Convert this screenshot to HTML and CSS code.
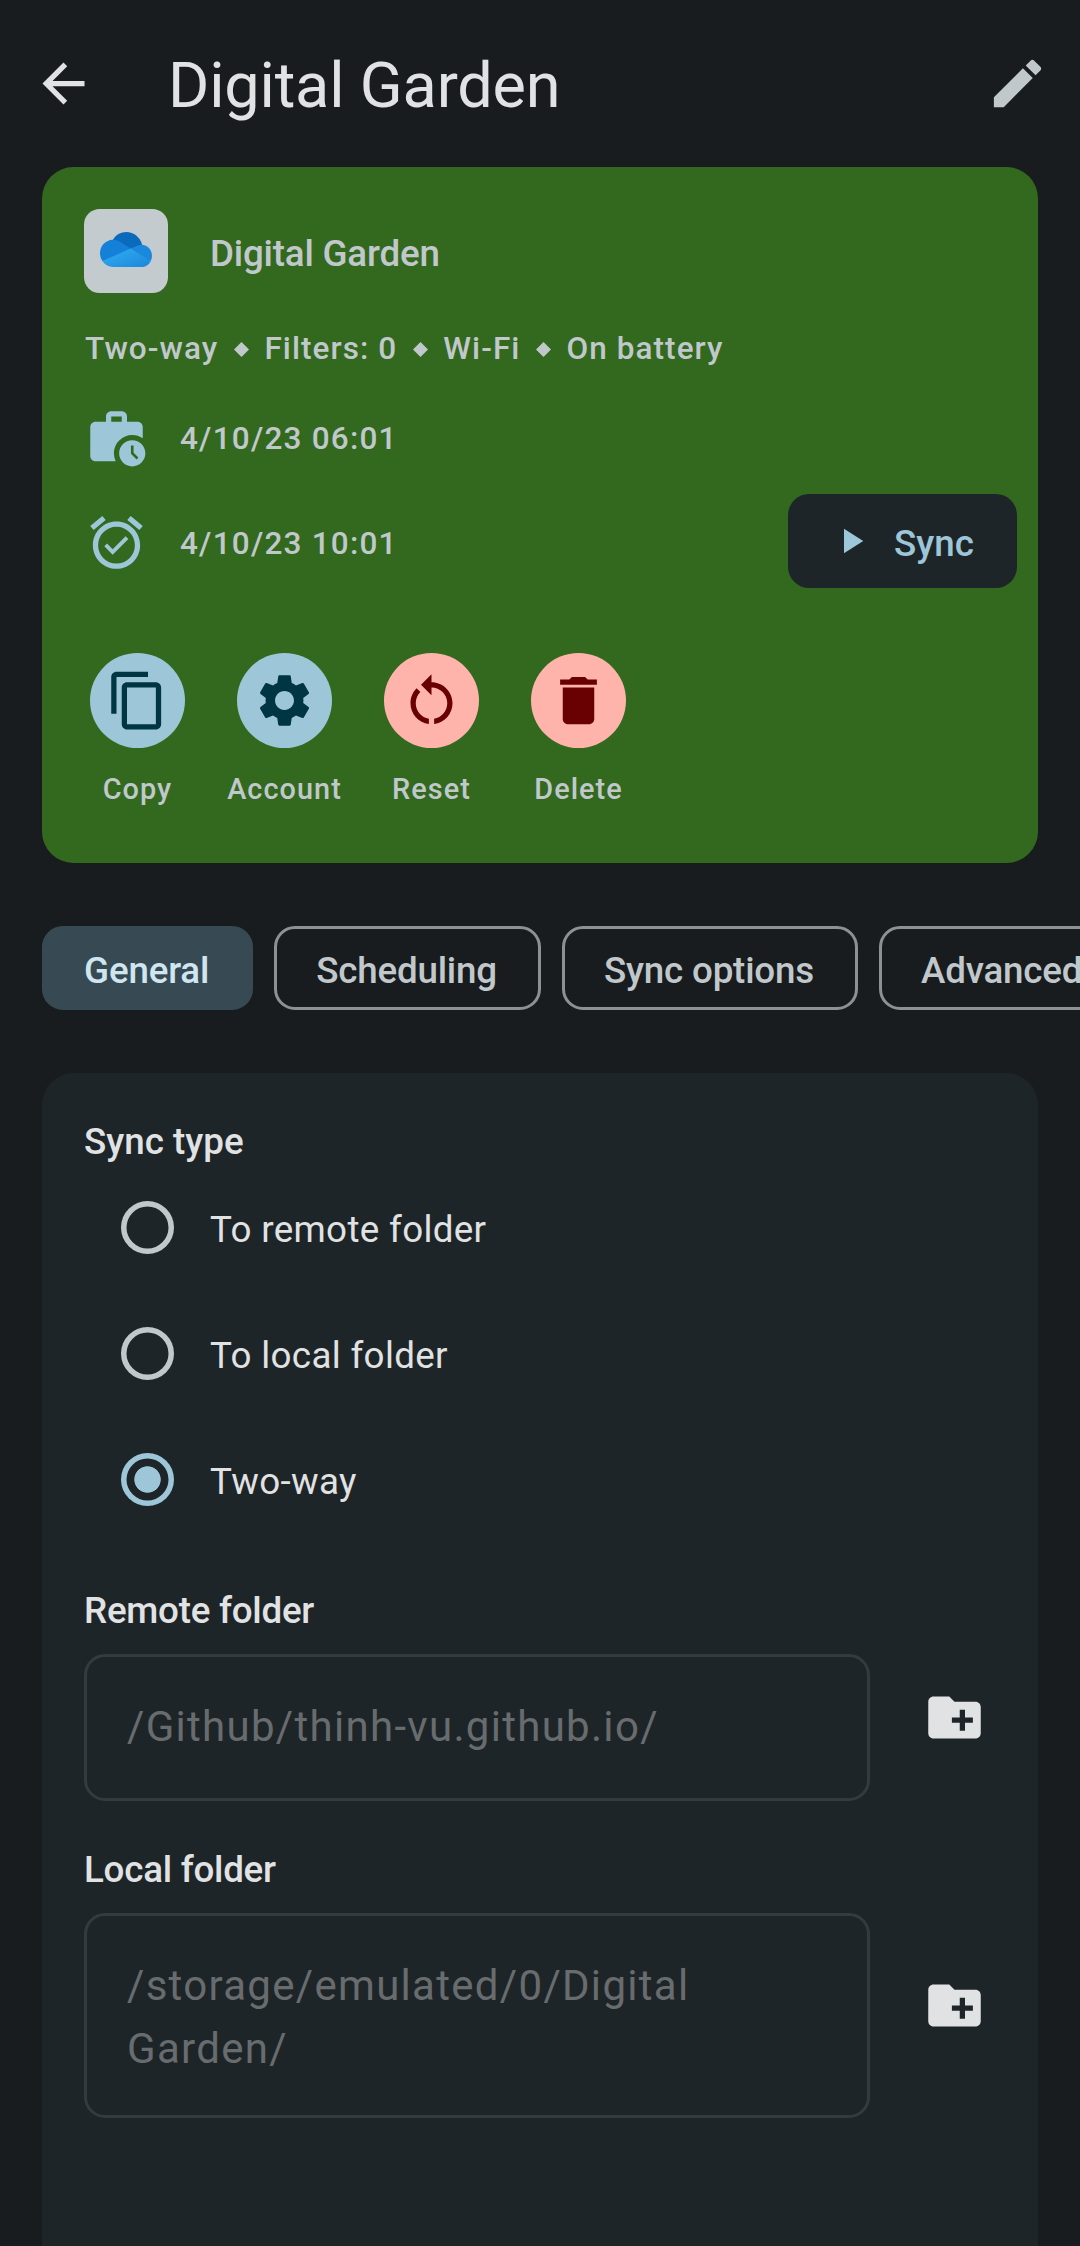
FILE: index.html
```html
<!DOCTYPE html>
<html lang="en">
<head>
<meta charset="utf-8">
<title>Digital Garden</title>
<link rel="stylesheet" href="styles.css">
</head>
<body>
<header class="app-bar">
  <svg class="icon" viewBox="0 0 24 24"><path d="M20 11H7.83l5.59-5.59L12 4l-8 8 8 8 1.41-1.41L7.83 13H20v-2z"/></svg>
  <h1 class="app-title">Digital Garden</h1>
  <svg class="icon icon-edit" viewBox="0 0 24 24"><path d="M3 17.25V21h3.75L17.81 9.94l-3.75-3.75L3 17.25zM20.71 7.04c.39-.39.39-1.02 0-1.41l-2.34-2.34c-.39-.39-1.02-.39-1.41 0l-1.83 1.83 3.75 3.75 1.83-1.83z"/></svg>
</header>

<section class="summary">
  <div class="summary-head">
    <div class="provider">
      <svg class="cloud" viewBox="0 0 1030 661" preserveAspectRatio="none">
        <defs><linearGradient id="base" x1="0" y1="0" x2="1" y2="1"><stop offset="0" stop-color="#32b0f2"/><stop offset="1" stop-color="#1b86dc"/></linearGradient></defs>
        <path fill="#0a6bbd" d="M622.292 445.338l212.613-203.327C790.741 69.804 615.338-33.996 443.13 10.168a321.9 321.9 0 0 0-188.92 134.837c3.29-.083 368.082 300.333 368.082 300.333z"/>
        <path fill="#1580d8" d="M392.776 183.283l-.01.035a256.233 256.233 0 0 0-135.925-38.823c-1.104 0-2.19.076-3.29.083C112.063 146.765-1.74 263.423.02 404.91a257.24 257.24 0 0 0 46.246 144.094l318.528-39.894 244.21-196.915-216.228-128.912z"/>
        <path fill="#1a88dc" d="M834.905 242.012c-4.674-.312-9.37-.528-14.123-.528a208.5 208.5 0 0 0-82.93 17.117l-.006-.022-128.844 54.22 142.04 175.456 253.934 61.728c54.8-101.732 16.752-228.625-84.98-283.424a209.2 209.2 0 0 0-85.09-24.546z"/>
        <path fill="url(#base)" d="M46.265 549.003C94.36 618.757 173.7 660.386 258.43 660.276h562.356c76.937.022 147.691-42.157 184.186-109.89L609.003 312.8z"/>
      </svg>
    </div>
    <h2 class="label label-summary">Digital Garden</h2>
  </div>

  <div class="facts">
    <span>Two-way</span>
    <svg class="diamond" viewBox="0 0 14 14"><path d="M7 0l7 7-7 7-7-7z"/></svg>
    <span>Filters: 0</span>
    <svg class="diamond" viewBox="0 0 14 14"><path d="M7 0l7 7-7 7-7-7z"/></svg>
    <span>Wi-Fi</span>
    <svg class="diamond" viewBox="0 0 14 14"><path d="M7 0l7 7-7 7-7-7z"/></svg>
    <span>On battery</span>
  </div>

  <div class="run-row">
    <svg class="icon" viewBox="0 0 24 24"><path d="M18 11c1.49 0 2.87.47 4 1.26V8c0-1.11-.89-2-2-2h-4V4c0-1.11-.89-2-2-2h-4c-1.11 0-2 .89-2 2v2H4c-1.11 0-1.99.89-1.99 2L2 19c0 1.11.89 2 2 2h7.68A6.95 6.95 0 0 1 11 18c0-3.87 3.13-7 7-7zM10 4h4v2h-4V4z"/><path d="M18 13c-2.76 0-5 2.24-5 5s2.24 5 5 5 5-2.24 5-5-2.24-5-5-5zm1.65 7.35L17.5 18.2V15h1v2.79l1.85 1.85-.7.71z"/></svg>
    <span>4/10/23 06:01</span>
  </div>
  <div class="run-row run-next">
    <svg class="icon" viewBox="0 0 24 24"><path d="M22 5.72l-4.6-3.86-1.29 1.53 4.6 3.86L22 5.72zM7.88 3.39L6.6 1.86 2 5.71l1.29 1.53 4.59-3.85zM12 4c-4.97 0-9 4.03-9 9s4.02 9 9 9c4.97 0 9-4.03 9-9s-4.03-9-9-9zm0 16c-3.87 0-7-3.13-7-7s3.13-7 7-7 7 3.13 7 7-3.13 7-7 7zm-1.46-5.47L8.41 12.4l-1.06 1.06 3.18 3.18 6-6-1.06-1.06-4.93 4.95z"/></svg>
    <span>4/10/23 10:01</span>
    <button class="sync label"><svg class="play" viewBox="0 0 24 24"><path d="M8 5v14l11-7z"/></svg><span>Sync</span></button>
  </div>

  <div class="actions">
    <div class="action">
      <div class="disc"><svg class="icon" viewBox="0 0 24 24"><path d="M16 1H4c-1.1 0-2 .9-2 2v14h2V3h12V1zm3 4H8c-1.1 0-2 .9-2 2v14c0 1.1.9 2 2 2h11c1.1 0 2-.9 2-2V7c0-1.1-.9-2-2-2zm0 16H8V7h11v14z"/></svg></div>
      <span>Copy</span>
    </div>
    <div class="action">
      <div class="disc"><svg class="icon" viewBox="0 0 24 24"><path d="M19.14,12.94c0.04-0.3,0.06-0.61,0.06-0.94c0-0.32-0.02-0.64-0.07-0.94l2.03-1.58c0.18-0.14,0.23-0.41,0.12-0.61l-1.92-3.32c-0.12-0.22-0.37-0.29-0.59-0.22l-2.39,0.96c-0.5-0.38-1.03-0.7-1.62-0.94L14.4,2.81c-0.04-0.24-0.24-0.41-0.48-0.41h-3.84c-0.24,0-0.43,0.17-0.47,0.41L9.25,5.35C8.66,5.59,8.12,5.92,7.63,6.29L5.24,5.33c-0.22-0.08-0.47,0-0.59,0.22L2.74,8.87C2.62,9.08,2.66,9.34,2.86,9.48l2.03,1.58C4.84,11.36,4.8,11.69,4.8,12s0.02,0.64,0.07,0.94l-2.03,1.58c-0.18,0.14-0.23,0.41-0.12,0.61l1.92,3.32c0.12,0.22,0.37,0.29,0.59,0.22l2.39-0.96c0.5,0.38,1.03,0.7,1.62,0.94l0.36,2.54c0.05,0.24,0.24,0.41,0.48,0.41h3.84c0.24,0,0.44-0.17,0.47-0.41l0.36-2.54c0.59-0.24,1.13-0.56,1.62-0.94l2.39,0.96c0.22,0.08,0.47,0,0.59-0.22l1.92-3.32c0.12-0.22,0.07-0.47-0.12-0.61L19.14,12.94z M12,15.6c-1.98,0-3.6-1.62-3.6-3.6s1.62-3.6,3.6-3.6s3.6,1.62,3.6,3.6S13.98,15.6,12,15.6z"/></svg></div>
      <span>Account</span>
    </div>
    <div class="action">
      <div class="disc disc-danger"><svg class="icon" viewBox="0 0 24 24"><path d="M12,5V2L8,6l4,4V7c3.31,0,6,2.69,6,6c0,2.97-2.17,5.43-5,5.91v2.02c3.95-0.49,7-3.85,7-7.93C20,8.58,16.42,5,12,5z"/><path d="M6,13c0-1.65,0.67-3.15,1.76-4.24L6.34,7.34C4.9,8.79,4,10.79,4,13c0,4.08,3.05,7.44,7,7.93v-2.02C8.17,18.43,6,15.97,6,13z"/></svg></div>
      <span>Reset</span>
    </div>
    <div class="action">
      <div class="disc disc-danger"><svg class="icon" viewBox="0 0 24 24"><path d="M6 19c0 1.1.9 2 2 2h8c1.1 0 2-.9 2-2V7H6v12zM19 4h-3.5l-1-1h-5l-1 1H5v2h14V4z"/></svg></div>
      <span>Delete</span>
    </div>
  </div>
</section>

<nav class="tabs">
  <button class="tab tab-active label">General</button>
  <button class="tab label">Scheduling</button>
  <button class="tab label">Sync options</button>
  <button class="tab label">Advanced</button>
</nav>

<main class="panel">
  <h3 class="label heading-type">Sync type</h3>
  <div class="choices">
    <div class="choice"><span class="radio"></span><span>To remote folder</span></div>
    <div class="choice"><span class="radio"></span><span>To local folder</span></div>
    <div class="choice"><span class="radio radio-on"></span><span>Two-way</span></div>
  </div>

  <h3 class="label heading-folder">Remote folder</h3>
  <div class="folder-row">
    <div class="field">/Github/thinh-vu.github.io/</div>
    <svg class="icon pick" viewBox="0 0 24 24"><path d="M20 6h-8l-2-2H4c-1.11 0-1.99.89-1.99 2L2 18c0 1.11.89 2 2 2h16c1.11 0 2-.89 2-2V8c0-1.11-.89-2-2-2zm-1 8h-3v3h-2v-3h-3v-2h3V9h2v3h3v2z"/></svg>
  </div>

  <h3 class="label heading-folder">Local folder</h3>
  <div class="folder-row">
    <div class="field field-tall">/storage/emulated/0/Digital Garden/</div>
    <svg class="icon pick" viewBox="0 0 24 24"><path d="M20 6h-8l-2-2H4c-1.11 0-1.99.89-1.99 2L2 18c0 1.11.89 2 2 2h16c1.11 0 2-.89 2-2V8c0-1.11-.89-2-2-2zm-1 8h-3v3h-2v-3h-3v-2h3V9h2v3h3v2z"/></svg>
  </div>
</main>
</body>
</html>
```
FILE: styles.css
```css
* { box-sizing: border-box; }

body {
  margin: 0;
  width: 1080px;
  height: 2246px;
  overflow: hidden;
  display: flex;
  flex-direction: column;
  background: #191c1e;
  color: #e1e2e4;
  font-family: Roboto, "Noto Sans", sans-serif;
}

h1, h2, h3 { margin: 0; }

button {
  margin: 0;
  padding: 0;
  border: 0;
  background: none;
  font-family: inherit;
  color: inherit;
}

svg { display: block; flex: none; fill: currentColor; }

.icon { width: 63px; height: 63px; }

/* 14sp medium label */
.label {
  font-size: 36.75px;
  font-weight: 500;
  line-height: 53px;
  letter-spacing: -0.2px;
  white-space: nowrap;
}

/* top bar */
.app-bar {
  flex: none;
  height: 167px;
  padding: 0 31px 0 32px;
  display: flex;
  align-items: center;
}

.app-title {
  flex: 1;
  margin-left: 73px;
  padding-top: 4px;
  font-size: 63px;
  font-weight: 400;
  line-height: 84px;
  letter-spacing: -0.17px;
}

.icon-edit { color: #c0c8cc; }

/* green summary card */
.summary {
  flex: none;
  height: 696px;
  margin: 0 42px;
  padding: 42px 21px 0 42px;
  border-radius: 31.5px;
  background: #33691e;
  color: #c0c8cc;
  font-size: 31.5px;
  font-weight: 500;
  line-height: 42px;
  letter-spacing: 1.05px;
}

.summary-head { display: flex; align-items: center; gap: 42px; height: 84px; }

.provider {
  width: 84px;
  height: 84px;
  display: flex;
  align-items: center;
  justify-content: center;
  border-radius: 15.75px;
  background: #c4cbcf;
}

.cloud { width: 52px; height: 35px; margin-bottom: 4px; }

.label-summary { padding-top: 5px; }

.facts { display: flex; align-items: center; gap: 15.6px; margin: 35px 0 0 1px; }

.diamond { width: 15px; height: 15px; }

.run-row {
  display: flex;
  align-items: center;
  gap: 32px;
  height: 105px;
  margin: 15px 0 0 1px;
  color: #9dc6d8;
}

.run-next { margin-top: 0; }

.run-row > span { padding-top: 2px; color: #c0c8cc; letter-spacing: 1.22px; }

.sync {
  width: 229px;
  height: 94px;
  margin: 0 0 3px auto;
  display: flex;
  align-items: center;
  padding-left: 42px;
  gap: 22px;
  border-radius: 21px;
  background: #1e2528;
  color: #9dc6d8;
}

.play { width: 42px; height: 42px; }

.sync span { padding-top: 4px; letter-spacing: 0; }

.actions { display: flex; margin: 58px 0 0 -20px; }

.action {
  width: 147px;
  display: flex;
  flex-direction: column;
  align-items: center;
  gap: 20px;
  font-size: 28.875px;
}

.disc {
  width: 95px;
  height: 95px;
  display: flex;
  align-items: center;
  justify-content: center;
  border-radius: 50%;
  background: #9dc6d8;
  color: #003543;
}

.disc-danger { background: #ffb4ab; color: #690002; }

/* tab chips */
.tabs {
  flex: none;
  display: flex;
  gap: 21px;
  margin: 63px 0 63px 42px;
}

.tab {
  flex: none;
  height: 84px;
  padding: 4px 41px 0 39.1px;
  border: 3px solid #8a9296;
  border-radius: 21px;
  color: #c0c8cc;
}

.tab-active { border-color: #374a53; background: #374a53; color: #cfe6f1; }

/* settings panel */
.panel {
  flex: 1;
  margin: 0 42px;
  padding: 42px 42px 0;
  border-radius: 31.5px 31.5px 0 0;
  background: #1e2528;
}

.heading-type { letter-spacing: 0; }

.choices { margin-top: -4px; font-size: 36.75px; letter-spacing: 0.34px; }

.choice { display: flex; align-items: center; gap: 36px; height: 126px; padding-left: 37px; }

.choice span:last-child { padding-top: 4px; }

.radio {
  flex: none;
  width: 53px;
  height: 53px;
  border-radius: 50%;
  box-shadow: inset 0 0 0 5.5px #c0c8cc;
}

.radio-on {
  box-shadow: inset 0 0 0 5.5px #9dc6d8;
  background: radial-gradient(circle, #9dc6d8 12.8px, transparent 13.6px);
}

.heading-folder { margin-top: 42px; letter-spacing: -0.25px; }

.folder-row { display: flex; align-items: flex-start; margin-top: 17px; }

.field {
  flex: none;
  width: 786px;
  height: 147px;
  padding: 38px 40px;
  border: 3px solid #343b3e;
  border-radius: 21px;
  color: #686c6e;
  font-size: 42px;
  line-height: 63px;
  letter-spacing: 1.3px;
}

.field-tall { height: 205px; }

.pick { margin: 32px 0 0 53px; }

.field-tall + .pick { margin-top: 61px; }
```
